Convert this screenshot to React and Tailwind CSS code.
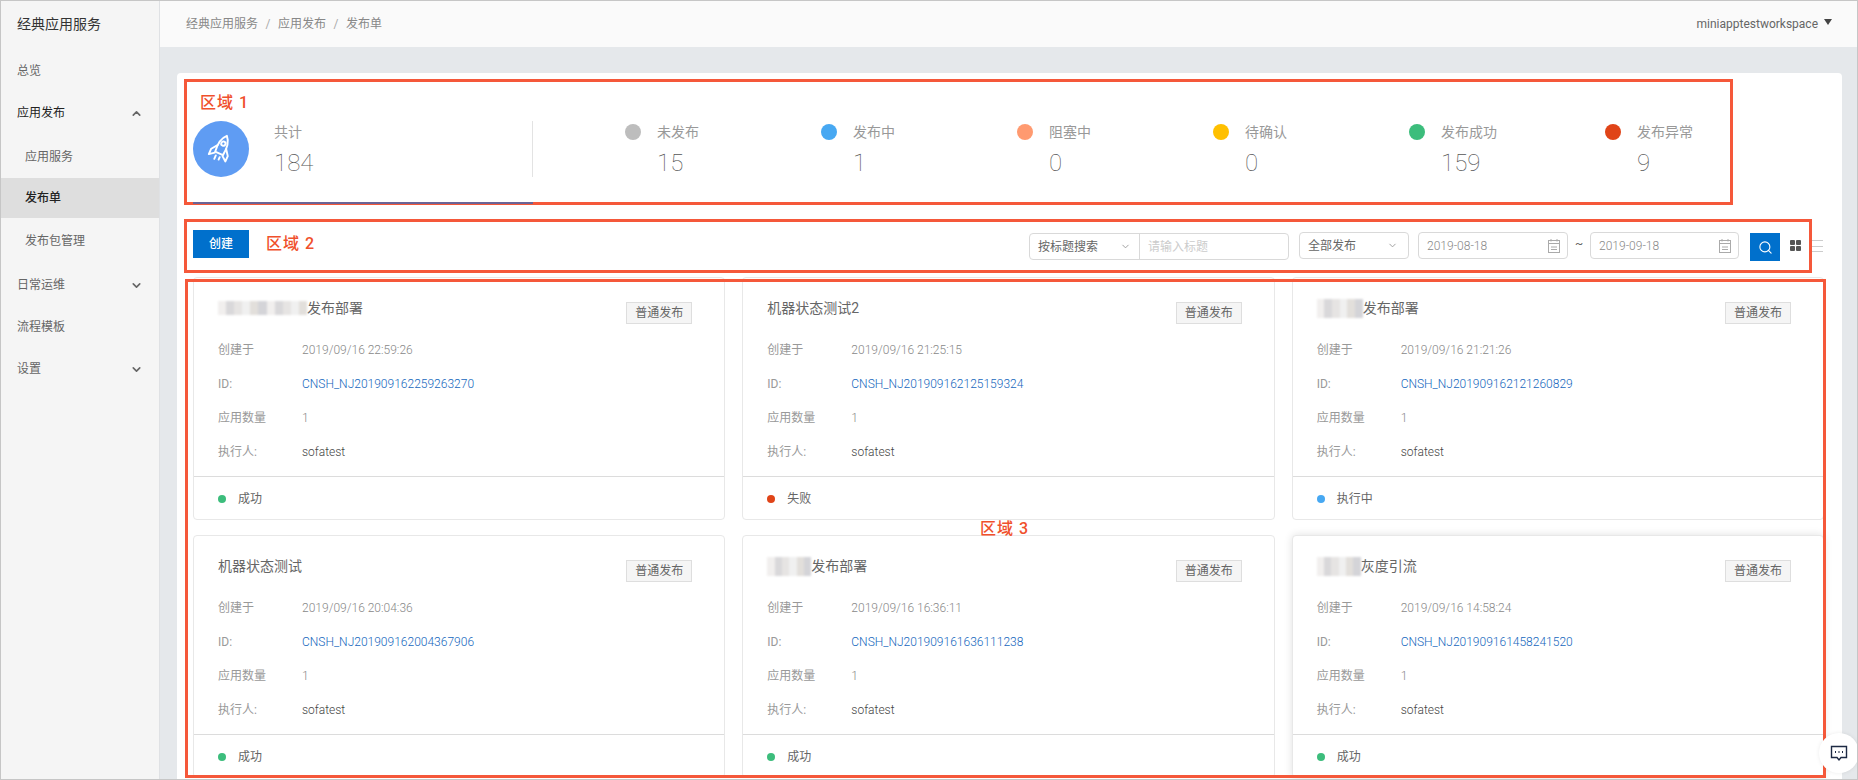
import { Search, ChevronDown, ChevronUp } from "lucide-react";

const stats = [
  { label: "未发布", value: 15, dot: "bg-[#bdbdbd]" },
  { label: "发布中", value: 1, dot: "bg-[#47a8f2]" },
  { label: "阻塞中", value: 0, dot: "bg-[#ff9a70]" },
  { label: "待确认", value: 0, dot: "bg-[#ffc000]" },
  { label: "发布成功", value: 159, dot: "bg-[#3cbd7c]" },
  { label: "发布异常", value: 9, dot: "bg-[#e04418]" },
];

const cards = [
  { mosaic: 89, tall: false, title: "发布部署", created: "2019/09/16 22:59:26", id: "CNSH_NJ201909162259263270", status: "成功", dot: "bg-[#3cbd7c]" },
  { mosaic: 0, title: "机器状态测试2", created: "2019/09/16 21:25:15", id: "CNSH_NJ201909162125159324", status: "失败", dot: "bg-[#e04418]" },
  { mosaic: 46, tall: true, title: "发布部署", created: "2019/09/16 21:21:26", id: "CNSH_NJ201909162121260829", status: "执行中", dot: "bg-[#47a8f2]" },
  { mosaic: 0, title: "机器状态测试", created: "2019/09/16 20:04:36", id: "CNSH_NJ201909162004367906", status: "成功", dot: "bg-[#3cbd7c]" },
  { mosaic: 44, tall: true, title: "发布部署", created: "2019/09/16 16:36:11", id: "CNSH_NJ201909161636111238", status: "成功", dot: "bg-[#3cbd7c]" },
  { mosaic: 44, tall: true, title: "灰度引流", created: "2019/09/16 14:58:24", id: "CNSH_NJ201909161458241520", status: "成功", dot: "bg-[#3cbd7c]", hover: true },
];

const mosaicShades = ["bg-[#e6e4e3]", "bg-[#d9d8da]", "bg-[#f1efee]", "bg-[#d4d4d8]", "bg-[#e2dfdb]", "bg-[#f0f0f0]"];

function Mosaic({ width, tall }) {
  const cells = Array.from({ length: Math.round(width / 8) });
  return (
    <div className={`flex shrink-0 blur-[1px] ${tall ? "h-[19px]" : "h-[14px]"}`} style={{ width }}>
      {cells.map((_, i) => (
        <div key={i} className={`flex-1 ${mosaicShades[(i * 5 + 2) % 6]}`} />
      ))}
    </div>
  );
}

function Rocket() {
  return (
    <svg width="28" height="32" viewBox="0 0 26 30" fill="none" stroke="white" strokeWidth="1.8" strokeLinejoin="round" strokeLinecap="round">
      <g transform="rotate(24 13 15)">
        <path d="M13 1.5C17 5.5 18.2 11 17 19.5H9C7.8 11 9 5.5 13 1.5Z" />
        <circle cx="13" cy="9.5" r="2" />
        <path d="M8.6 13L4.5 18.5V24L9 20.5" />
        <path d="M17.4 13L21.5 18.5V24L17 20.5" />
        <path d="M11 22.5V26M15 22.5V25" />
      </g>
    </svg>
  );
}

function CalendarIcon() {
  return (
    <svg width="14" height="16" viewBox="0 0 14 16" fill="none" stroke="#aaa" strokeWidth="1" className="shrink-0">
      <rect x="1.5" y="2.5" width="11" height="12" />
      <path d="M1.5 5.5H12.5M4 1V3.5M10 1V3.5M4 9H10M4 11.5H10" />
    </svg>
  );
}

function DateBox({ value, width }) {
  return (
    <div className={`mt-[2px] flex h-[27px] items-center justify-between rounded border border-[#d9d9d9] pl-2 pr-[6px] text-xs font-light text-[#888] ${width}`}>
      {value}
      <CalendarIcon />
    </div>
  );
}

function StatCard({ label, value, dot }) {
  return (
    <div className="flex w-[196px]">
      <div className={`mt-[3px] h-4 w-4 rounded-full ${dot}`} />
      <div className="ml-4">
        <div className="text-[14px] leading-[22px] text-[#999]">{label}</div>
        <div className="mt-[5px] text-2xl font-thin leading-[30px] text-[#555]">{value}</div>
      </div>
    </div>
  );
}

function Row({ label, children }) {
  return (
    <div className="flex h-[34px] items-center text-xs">
      <span className="w-[84px] text-[#999]">{label}</span>
      {children}
    </div>
  );
}

function ReleaseCard({ card }) {
  return (
    <div className={`h-[243px] rounded-sm border border-[#e8e8e8] bg-white ${card.hover ? "shadow-[0_0_8px_rgba(0,0,0,0.12)]" : ""}`}>
      <div className="h-[198px] pl-6 pr-8 pt-6">
        <div className="flex items-start justify-between">
          <div className="-mt-[6px] flex h-6 items-center text-[14px] text-[#666]">
            {card.mosaic > 0 && <Mosaic width={card.mosaic} tall={card.tall} />}
            {card.title}
          </div>
          <div className="flex h-[22px] w-[66px] items-center justify-center border border-[#dedede] bg-[#f5f5f5] text-xs text-[#666]">
            普通发布
          </div>
        </div>
        <div className="mt-[9px]">
          <Row label="创建于">
            <span className="font-light text-[#888]">{card.created}</span>
          </Row>
          <Row label="ID:">
            <span className="font-light text-[#1567bd]">{card.id}</span>
          </Row>
          <Row label="应用数量">
            <span className="font-light text-[#888]">1</span>
          </Row>
          <Row label="执行人:">
            <span className="font-light text-[#444]">sofatest</span>
          </Row>
        </div>
      </div>
      <div className="flex h-[44px] items-center border-t border-[#dcdcdc] pl-6 text-xs text-[#666]">
        <span className={`mr-3 h-2 w-2 rounded-full ${card.dot}`} />
        {card.status}
      </div>
    </div>
  );
}

function Chevron({ up }) {
  const Icon = up ? ChevronUp : ChevronDown;
  return <Icon size={13} strokeWidth={3} className="text-[#666]" />;
}

function MenuRow({ children, chevron, active, up }) {
  return (
    <div className={`flex h-[42px] items-center justify-between pl-4 pr-4 text-xs ${active ? "text-[#222]" : "text-[#666]"}`}>
      {children}
      {chevron && <Chevron up={up} />}
    </div>
  );
}

function Sidebar() {
  return (
    <aside className="w-[159px] shrink-0 border-r border-[#dfe1e4] bg-[#f5f5f5]">
      <div className="flex h-[46px] items-center pl-4 text-[14px] text-[#333]">经典应用服务</div>
      <nav className="mt-[3px]">
        <MenuRow>总览</MenuRow>
        <MenuRow chevron up active>应用发布</MenuRow>
        <div className="flex h-[44px] items-center pl-6 pt-[2px] text-xs text-[#666]">应用服务</div>
        <div className="flex h-10 items-center bg-[#dedede] pl-6 text-xs font-medium text-[#222]">发布单</div>
        <div className="flex h-[46px] items-center pl-6 text-xs text-[#666]">发布包管理</div>
        <MenuRow chevron>日常运维</MenuRow>
        <MenuRow>流程模板</MenuRow>
        <MenuRow chevron>设置</MenuRow>
      </nav>
    </aside>
  );
}

function Header() {
  return (
    <header className="flex h-[46px] shrink-0 items-center justify-between bg-[#fafafa] pl-[26px] pr-[25px] text-xs text-[#888]">
      <div className="flex items-center">
        <span>经典应用服务</span>
        <span className="mx-[7.5px] text-[#aaa]">/</span>
        <span>应用发布</span>
        <span className="mx-[7.5px] text-[#aaa]">/</span>
        <span>发布单</span>
      </div>
      <div className="flex items-center text-[#666]">
        <span>miniapptestworkspace</span>
        <span className="mb-[5px] ml-[6px] h-0 w-0 border-x-[4px] border-t-[6px] border-x-transparent border-t-[#444]" />
      </div>
    </header>
  );
}

function Toolbar() {
  return (
    <div className="mt-[26px] flex h-[47px] items-start">
      <button className="h-7 w-14 bg-[#0070cc] text-xs font-medium text-white">创建</button>
      <div className="ml-auto mt-[3px] flex h-[27px] w-[260px] rounded border border-[#d9d9d9] text-xs">
        <div className="flex w-[110px] items-center justify-between border-r border-[#d9d9d9] pl-2 pr-2 text-[#666]">
          按标题搜索
          <ChevronDown size={11} className="text-[#999]" />
        </div>
        <div className="flex items-center pl-2 text-[#ccc]">请输入标题</div>
      </div>
      <div className="ml-[10px] mt-[2px] flex h-[27px] w-[110px] items-center justify-between rounded border border-[#d9d9d9] pl-2 pr-[10px] text-xs text-[#666]">
        全部发布
        <ChevronDown size={11} className="text-[#999]" />
      </div>
      <div className="ml-[9px]">
        <DateBox value="2019-08-18" width="w-[150px]" />
      </div>
      <span className="mt-[6px] w-[22px] text-center text-xs text-[#666]">~</span>
      <DateBox value="2019-09-18" width="w-[149px]" />
      <button className="ml-[11px] mt-[3px] flex h-7 w-[30px] items-center justify-center bg-[#0070cc]">
        <Search size={15} className="text-white" strokeWidth={1.8} />
      </button>
      <div className="ml-[10px] mt-[10px] grid h-[11px] w-[11px] grid-cols-2 gap-[1.5px]">
        <span className="rounded-[1px] bg-[#555]" />
        <span className="rounded-[1px] bg-[#555]" />
        <span className="rounded-[1px] bg-[#555]" />
        <span className="rounded-[1px] bg-[#555]" />
      </div>
      <div className="ml-[10px] mr-[3px] mt-[10px] flex h-[12px] w-[12px] flex-col justify-between">
        <span className="h-px bg-[#ccc]" />
        <span className="h-px bg-[#ccc]" />
        <span className="h-px bg-[#ccc]" />
      </div>
    </div>
  );
}

function Annotations() {
  return (
    <>
      <div className="absolute left-[183px] top-[78px] h-[126px] w-[1549px] border-[3px] border-[#f5583a] pl-[13px] pt-[11px] text-base font-medium leading-5 tracking-[1px] text-[#f0502c]">
        区域 1
      </div>
      <div className="absolute left-[183px] top-[218px] h-[54px] w-[1628px] border-[3px] border-[#f5583a] pl-[79px] pt-[12px] text-base font-medium leading-5 tracking-[1px] text-[#f0502c]">
        区域 2
      </div>
      <div className="absolute left-[184px] top-[278px] h-[499px] w-[1641px] border-[3px] border-[#f5583a]" />
      <div className="absolute left-[979px] top-[518px] text-base font-medium leading-5 tracking-[1px] text-[#f0502c]">区域 3</div>
      <div className="absolute left-[1818px] top-[732px] flex h-10 w-10 items-center justify-center rounded-full bg-white shadow-[0_0_4px_rgba(0,0,0,0.08)]">
        <svg width="18" height="17" viewBox="0 0 18 17" fill="none" stroke="#1d2a44" strokeWidth="1.4">
          <path d="M1.5 1.5H16.5V12.5H11L9 15L7 12.5H1.5Z" />
          <path d="M5 7H6M8.5 7H9.5M12 7H13" strokeWidth="1.8" />
        </svg>
      </div>
    </>
  );
}

export default function App() {
  return (
    <div className="relative flex h-[780px] w-[1858px] overflow-hidden border border-[#c6c6c6] font-['Roboto','Noto_Sans_CJK_SC',sans-serif]">
      <Sidebar />
      <div className="flex min-w-0 flex-1 flex-col bg-[#e5e8eb]">
        <Header />
        <main className="ml-[17px] mr-[15px] mt-[26px] flex-1 rounded-t bg-white px-4 pt-[48px]">
          <section className="flex">
            <div className="relative z-10 h-[83px] w-[340px] border-b-2 border-[#6a6496]">
              <div className="flex h-14 items-start border-r border-[#e3e3e3]">
                <div className="flex h-14 w-14 items-center justify-center rounded-full bg-[#5f9cf3]">
                  <Rocket />
                </div>
                <div className="ml-[25px]">
                  <div className="text-[14px] leading-[22px] text-[#999]">共计</div>
                  <div className="mt-[5px] text-2xl font-thin leading-[30px] text-[#555]">184</div>
                </div>
              </div>
            </div>
            <div className="ml-[92px] flex">
              {stats.map((s) => (
                <StatCard key={s.label} {...s} />
              ))}
            </div>
          </section>
          <Toolbar />
          <section className="grid grid-cols-3 gap-x-[17px] gap-y-[15px] pr-[2px]">
            {cards.map((c) => (
              <ReleaseCard key={c.id} card={c} />
            ))}
          </section>
        </main>
      </div>
      <Annotations />
    </div>
  );
}
